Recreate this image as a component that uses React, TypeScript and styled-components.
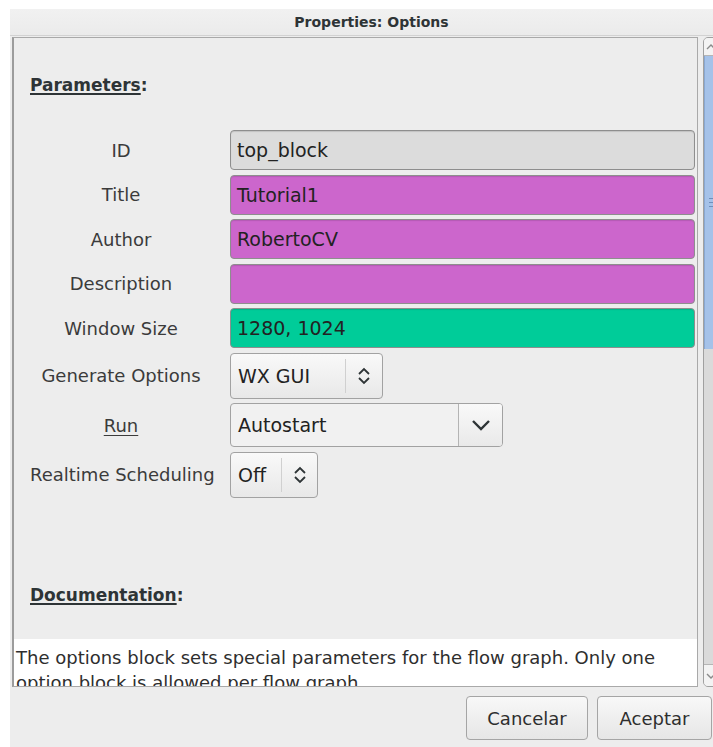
import styled, { createGlobalStyle } from "styled-components"

const GlobalStyle = createGlobalStyle`
  html, body {
    margin: 0;
    background: #ffffff;
    overflow: hidden;
  }
  body {
    font-family: "DejaVu Sans", "Liberation Sans", sans-serif;
    color: #2e3436;
  }
`

const Dialog = styled.div`
  margin: 9px 0 0 10px;
  width: 723px;
  height: 738px;
  background: #ededed;
  display: flex;
  flex-direction: column;
`

const TitleBar = styled.div`
  height: 26px;
  line-height: 26px;
  text-align: center;
  font-size: 14px;
  font-weight: bold;
  color: #2e3436;
  border-bottom: 1px solid #d2d2d2;
  background: linear-gradient(#f1f1f1, #ebebeb);
`

const Body = styled.div`
  display: flex;
  padding: 1px 0 0 2px;
`

const Panel = styled.div`
  width: 686px;
  height: 650px;
  box-sizing: border-box;
  border: 1px solid #a9a9a9;
  border-left: 2px solid #9c9c9c;
  display: flex;
  flex-direction: column;
  overflow: hidden;
`

const SectionTitle = styled.div<{ $top: number }>`
  margin: ${(p) => p.$top}px 0 0 16px;
  font-size: 17px;
  font-weight: bold;
  line-height: 22px;
  color: #2e3436;

  u {
    text-decoration-thickness: 2px;
    text-underline-offset: 2px;
  }
`

const Form = styled.div`
  display: flex;
  flex-direction: column;
  gap: 4.5px;
  margin: 34px 2px 0 16px;
`

const Row = styled.div<{ $height: number }>`
  display: grid;
  grid-template-columns: 182px 1fr;
  column-gap: 18px;
  height: ${(p) => p.$height}px;
`

const Label = styled.div`
  align-self: center;
  text-align: center;
  white-space: nowrap;
  font-size: 18px;
  color: #3b3b3b;

  u {
    text-underline-offset: 3px;
  }
`

const Entry = styled.div<{ $bg: string }>`
  height: 100%;
  box-sizing: border-box;
  display: flex;
  align-items: center;
  padding-left: 6px;
  border: 1px solid #8e8e8e;
  border-radius: 4px;
  background: ${(p) => p.$bg};
  box-shadow: inset 0 1px 1px rgba(0, 0, 0, 0.12);
  font-size: 19px;
  color: #222222;
`

const Combo = styled.div<{ $width: number; $split?: boolean }>`
  width: ${(p) => p.$width}px;
  height: 100%;
  box-sizing: border-box;
  display: flex;
  border: 1px solid #a2a2a2;
  border-radius: 4px;
  background: ${(p) => (p.$split ? "#f1f1f1" : "linear-gradient(#f9f9f9, #e8e8e8)")};
  overflow: hidden;
`

const ComboValue = styled.span`
  flex: 1;
  display: flex;
  align-items: center;
  padding-left: 7px;
  font-size: 19px;
  color: #222222;
`

const ComboButton = styled.span<{ $width: number; $split?: boolean }>`
  width: ${(p) => p.$width}px;
  display: flex;
  align-items: center;
  justify-content: center;
  box-sizing: border-box;
  border-left: 1px solid ${(p) => (p.$split ? "#b4b4b4" : "#d0d0d0")};
  margin: ${(p) => (p.$split ? "0" : "5px 0")};
  background: ${(p) => (p.$split ? "linear-gradient(#f9f9f9, #e9e9e9)" : "transparent")};
`

const DocTitle = styled(SectionTitle)`
  margin-top: auto;
`

const DocText = styled.div`
  margin-top: 33px;
  height: 47px;
  background: #ffffff;
  padding: 6px 0 0 2px;
  box-sizing: border-box;
  font-size: 18px;
  line-height: 25px;
  color: #2e2e2e;
  overflow: hidden;
`

const Scrollbar = styled.div`
  margin-left: 5px;
  width: 16px;
  height: 650px;
  box-sizing: border-box;
  border: 1px solid #a0a0a0;
  border-radius: 5px;
  background: #dadada;
  display: flex;
  flex-direction: column;
  overflow: hidden;
`

const ScrollStep = styled.div<{ $height: number; $bottom?: boolean }>`
  height: ${(p) => p.$height}px;
  background: #f3f3f3;
  display: flex;
  align-items: center;
  justify-content: center;
  ${(p) => (p.$bottom ? "border-top: 1px solid #b5b5b5;" : "border-bottom: 1px solid #b5b5b5;")}
`

const Thumb = styled.div`
  height: 293px;
  background: #a5c2e9;
  border-left: 1px solid #89a8d2;
  display: flex;
  align-items: center;
  justify-content: center;
`

const Grip = styled.div`
  width: 6px;
  height: 9px;
  background: repeating-linear-gradient(#6f8fbb 0 1px, transparent 1px 4px);
`

const Trough = styled.div`
  flex: 1;
`

const ButtonRow = styled.div`
  display: flex;
  justify-content: flex-end;
  gap: 9px;
  margin-top: 9px;
  padding-right: 21px;
`

const Button = styled.button<{ $width: number }>`
  width: ${(p) => p.$width}px;
  height: 44px;
  border: 1px solid #a5a5a5;
  border-radius: 4px;
  background: linear-gradient(#f8f8f8, #e6e6e6);
  font-family: inherit;
  font-size: 18px;
  color: #2e2e2e;
  padding: 0;
`

function SpinIcon() {
  return (
    <svg width="14" height="20" viewBox="0 0 14 20" fill="none" stroke="#2e3436" strokeWidth="1.8">
      <path d="M2 8 L7 3 L12 8" />
      <path d="M2 12 L7 17 L12 12" />
    </svg>
  )
}

function DropIcon() {
  return (
    <svg width="20" height="12" viewBox="0 0 20 12" fill="none" stroke="#2e3436" strokeWidth="2.4">
      <path d="M2 2 L10 10 L18 2" />
    </svg>
  )
}

function StepArrow({ down }: { down?: boolean }) {
  return (
    <svg width="10" height="6" viewBox="0 0 10 6" fill="none" stroke="#8a8a8a" strokeWidth="1.4">
      <path d={down ? "M1 1 L5 5 L9 1" : "M1 5 L5 1 L9 5"} />
    </svg>
  )
}

const entries = [
  { label: "ID", value: "top_block", bg: "#dcdcdc" },
  { label: "Title", value: "Tutorial1", bg: "#cc66cc" },
  { label: "Author", value: "RobertoCV", bg: "#cc66cc" },
  { label: "Description", value: "", bg: "#cc66cc" },
  { label: "Window Size", value: "1280, 1024", bg: "#00cc99" },
]

export default function App(): JSX.Element {
  return (
    <>
      <GlobalStyle />
      <Dialog>
        <TitleBar>Properties: Options</TitleBar>
        <Body>
          <Panel>
            <SectionTitle $top={36}>
              <u>Parameters</u>:
            </SectionTitle>
            <Form>
              {entries.map((e) => (
                <Row key={e.label} $height={40}>
                  <Label>{e.label}</Label>
                  <Entry $bg={e.bg}>{e.value}</Entry>
                </Row>
              ))}
              <Row $height={46}>
                <Label>Generate Options</Label>
                <Combo $width={153}>
                  <ComboValue>WX GUI</ComboValue>
                  <ComboButton $width={37}>
                    <SpinIcon />
                  </ComboButton>
                </Combo>
              </Row>
              <Row $height={44}>
                <Label>
                  <u>Run</u>
                </Label>
                <Combo $width={273} $split>
                  <ComboValue>Autostart</ComboValue>
                  <ComboButton $width={44} $split>
                    <DropIcon />
                  </ComboButton>
                </Combo>
              </Row>
              <Row $height={46}>
                <Label>Realtime Scheduling</Label>
                <Combo $width={88}>
                  <ComboValue>Off</ComboValue>
                  <ComboButton $width={36}>
                    <SpinIcon />
                  </ComboButton>
                </Combo>
              </Row>
            </Form>
            <DocTitle $top={0}>
              <u>Documentation</u>:
            </DocTitle>
            <DocText>
              The options block sets special parameters for the flow graph. Only one option block is
              allowed per flow graph.
            </DocText>
          </Panel>
          <Scrollbar>
            <ScrollStep $height={17}>
              <StepArrow />
            </ScrollStep>
            <Thumb>
              <Grip />
            </Thumb>
            <Trough />
            <ScrollStep $height={21} $bottom>
              <StepArrow down />
            </ScrollStep>
          </Scrollbar>
        </Body>
        <ButtonRow>
          <Button $width={122}>Cancelar</Button>
          <Button $width={115}>Aceptar</Button>
        </ButtonRow>
      </Dialog>
    </>
  )
}
